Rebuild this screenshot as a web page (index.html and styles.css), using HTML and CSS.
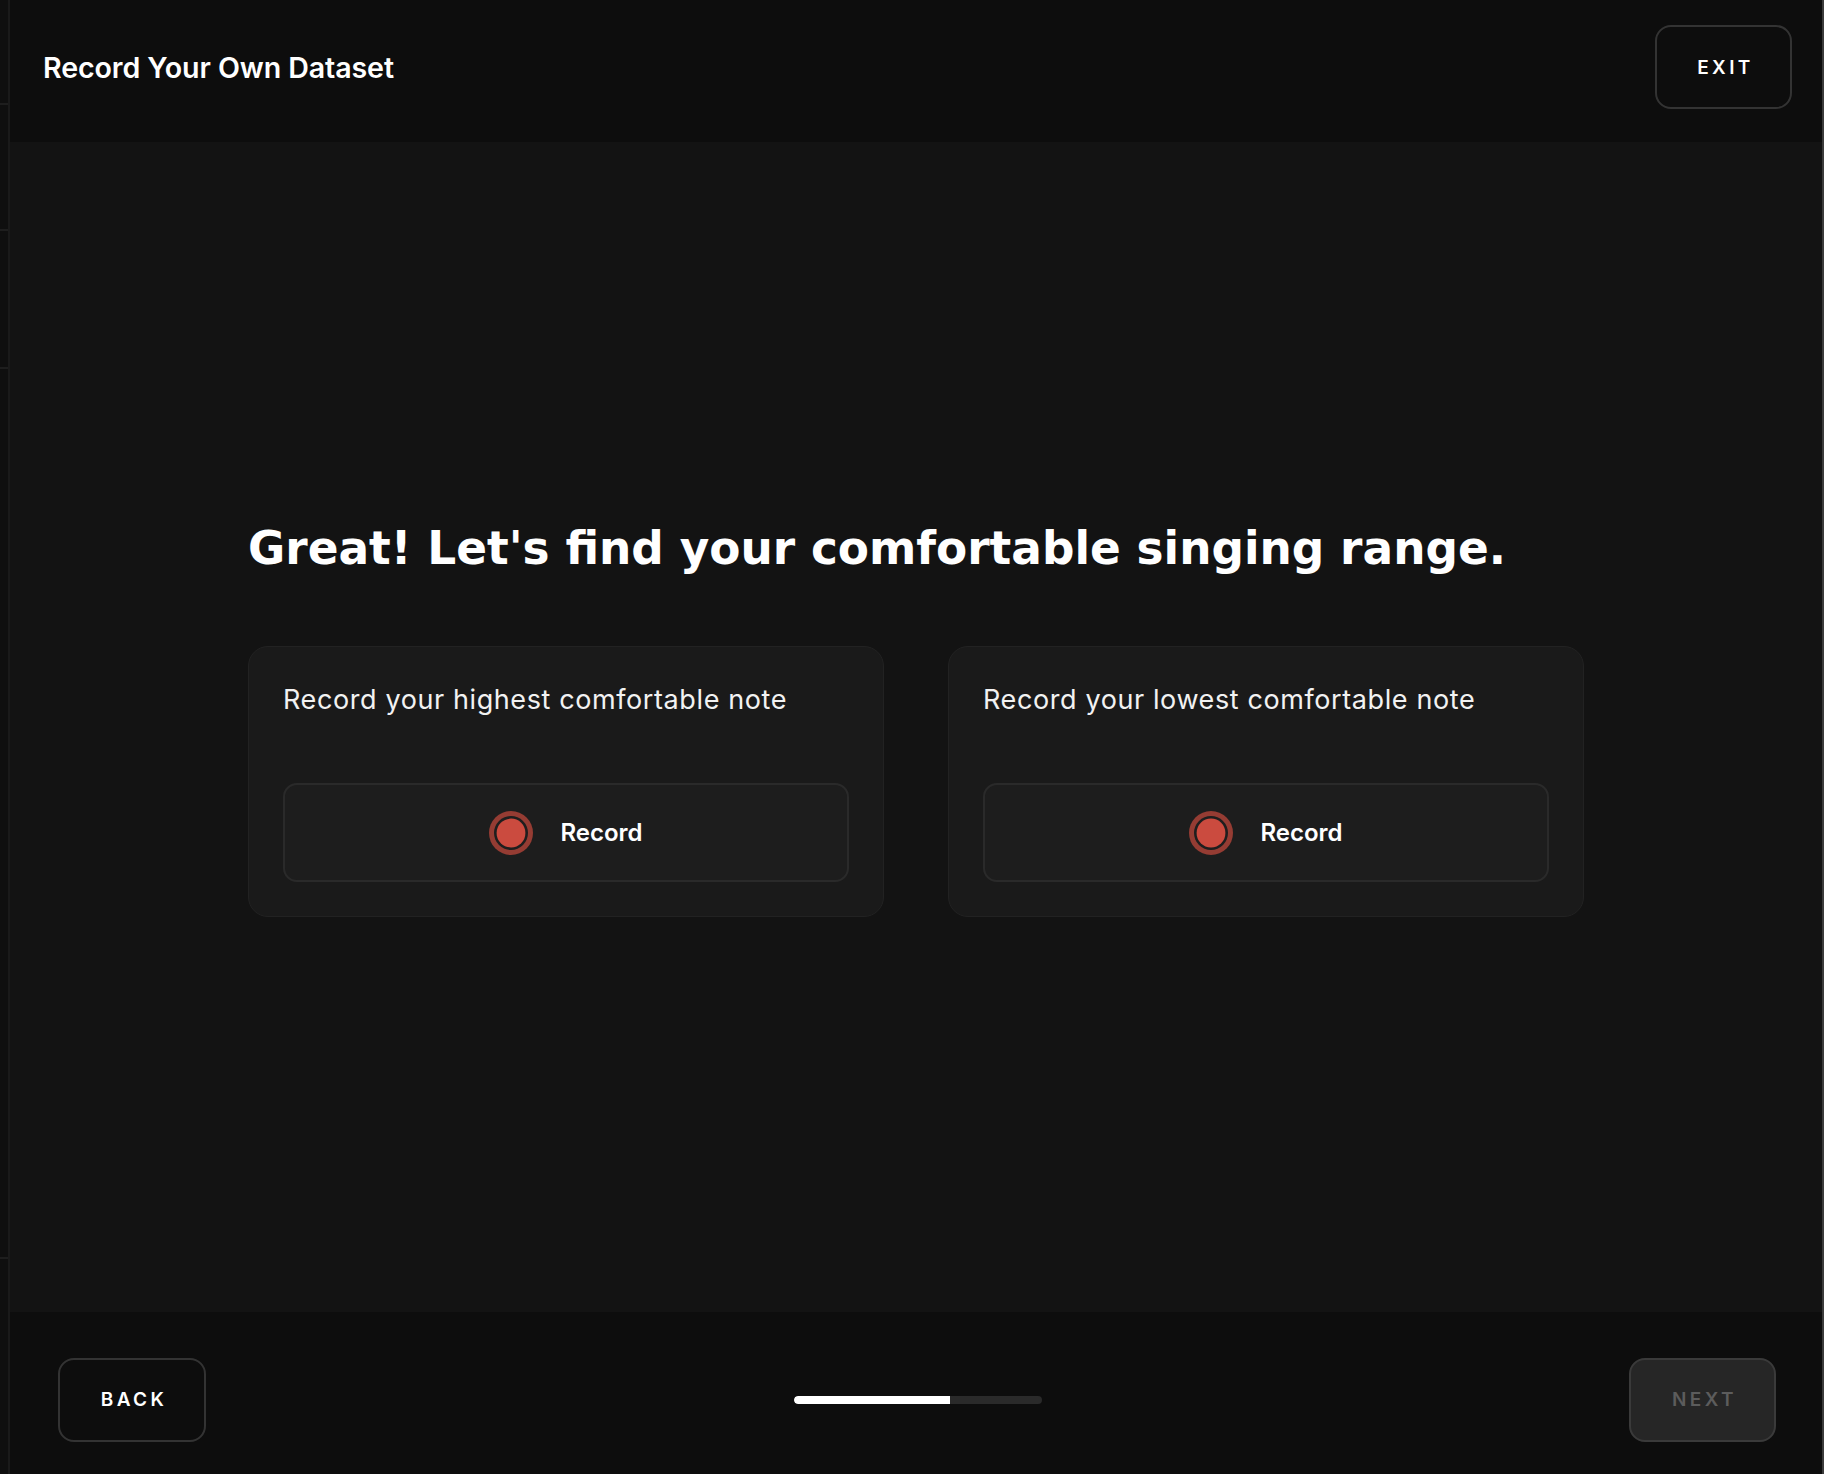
FILE: index.html
```html
<!DOCTYPE html>
<html lang="en">
<head>
  <meta charset="UTF-8">
  <title>Record Your Own Dataset</title>
  <link rel="stylesheet" href="styles.css">
</head>
<body>
  <div class="sidebar-edge">
    <span class="rule r1"></span>
    <span class="rule r2"></span>
    <span class="rule r3"></span>
    <span class="rule r4"></span>
  </div>

  <div class="app">
    <header class="topbar">
      <h1 class="title">Record Your Own Dataset</h1>
      <button class="btn-outline btn-exit">EXIT</button>
    </header>

    <main class="stage">
      <div class="range-step">
        <h2 class="headline">Great! Let's find your comfortable singing range.</h2>
        <div class="cards">
          <div class="card">
            <p class="card-label">Record your highest comfortable note</p>
            <button class="record-btn">
              <svg class="rec-icon" width="44" height="44" viewBox="0 0 44 44">
                <circle cx="22" cy="22" r="22" fill="#953c33"/>
                <circle cx="22" cy="22" r="17" fill="#1e1e1e"/>
                <circle cx="22" cy="22" r="14.4" fill="#cb4b3f"/>
              </svg>
              <span>Record</span>
            </button>
          </div>
          <div class="card">
            <p class="card-label">Record your lowest comfortable note</p>
            <button class="record-btn">
              <svg class="rec-icon" width="44" height="44" viewBox="0 0 44 44">
                <circle cx="22" cy="22" r="22" fill="#953c33"/>
                <circle cx="22" cy="22" r="17" fill="#1e1e1e"/>
                <circle cx="22" cy="22" r="14.4" fill="#cb4b3f"/>
              </svg>
              <span>Record</span>
            </button>
          </div>
        </div>
      </div>
    </main>

    <footer class="bottombar">
      <button class="btn-outline btn-back">BACK</button>
      <div class="progress"><div class="progress-fill" style="width: 63%"></div></div>
      <button class="btn-outline btn-next" disabled>NEXT</button>
    </footer>
  </div>
</body>
</html>
```

FILE: styles.css
```css
* {
  box-sizing: border-box;
  margin: 0;
  padding: 0;
}

html, body {
  height: 100%;
}

body {
  display: flex;
  background: #0e0e0e;
  font-family: Inter, 'Liberation Sans', sans-serif;
  color: #fff;
  overflow: hidden;
}

/* strip of the sidebar that peeks out on the left */
.sidebar-edge {
  position: relative;
  width: 10px;
  flex-shrink: 0;
  background: #0f0f0f;
  border-right: 2px solid #1a1a1a;
}

.sidebar-edge .rule {
  position: absolute;
  left: 0;
  width: 8px;
  height: 2px;
  background: #1e1e1e;
}

.r1 { top: 103px; }
.r2 { top: 229px; }
.r3 { top: 367px; }
.r4 { top: 1257px; }

.app {
  flex: 1;
  display: flex;
  flex-direction: column;
  border-right: 2px solid #3b3b3b;
}

.topbar {
  height: 142px;
  flex-shrink: 0;
  background: #0d0d0d;
  display: flex;
  align-items: center;
  justify-content: space-between;
  padding: 0 30px 8px 33px;
}

.title {
  font-size: 28.6px;
  font-weight: 600;
  letter-spacing: -0.1px;
}

.btn-outline {
  width: 136px;
  height: 82px;
  background: transparent;
  border: 2px solid #333;
  border-radius: 16px;
  color: #fff;
  font-family: Inter, 'Liberation Sans', sans-serif;
  font-size: 19px;
  font-weight: 600;
  letter-spacing: 3.4px;
  padding-left: 4px;
  cursor: pointer;
}

.btn-exit {
  width: 137px;
  height: 84px;
}

.stage {
  flex: 1;
  background: #131313;
  display: flex;
  align-items: center;
  justify-content: center;
  padding-bottom: 18px;
}

.range-step {
  width: 1336px;
}

.headline {
  font-family: 'DejaVu Sans', sans-serif;
  font-size: 45.4px;
  font-weight: 700;
  line-height: 60px;
  margin-bottom: 67px;
}

.cards {
  display: flex;
  gap: 64px;
}

.card {
  flex: 1;
  background: #1a1a1a;
  border: 1px solid #222;
  border-radius: 20px;
  padding: 36px 34px 34px;
}

.card-label {
  font-size: 27px;
  letter-spacing: 0.6px;
  line-height: 34px;
  color: #f2f2f2;
  margin-bottom: 66px;
}

.record-btn {
  width: 100%;
  height: 99px;
  display: flex;
  align-items: center;
  justify-content: center;
  gap: 27px;
  background: #1d1d1d;
  border: 2px solid #2a2a2a;
  border-radius: 14px;
  color: #fff;
  font-family: Inter, 'Liberation Sans', sans-serif;
  font-size: 24px;
  font-weight: 600;
  cursor: pointer;
}

.bottombar {
  height: 162px;
  flex-shrink: 0;
  background: #0d0d0d;
  display: flex;
  align-items: center;
  justify-content: space-between;
  padding: 13px 46px 0 48px;
}

.btn-back {
  width: 148px;
  height: 84px;
}

.btn-next {
  width: 147px;
  height: 84px;
  background: #262626;
  border-color: #3a3a3a;
  color: #5c5c5c;
  cursor: default;
}

.progress {
  width: 248px;
  height: 8px;
  border-radius: 4px;
  background: #2a2a2a;
  overflow: hidden;
}

.progress-fill {
  height: 100%;
  background: #fff;
  border-radius: 4px 0 0 4px;
}
```
